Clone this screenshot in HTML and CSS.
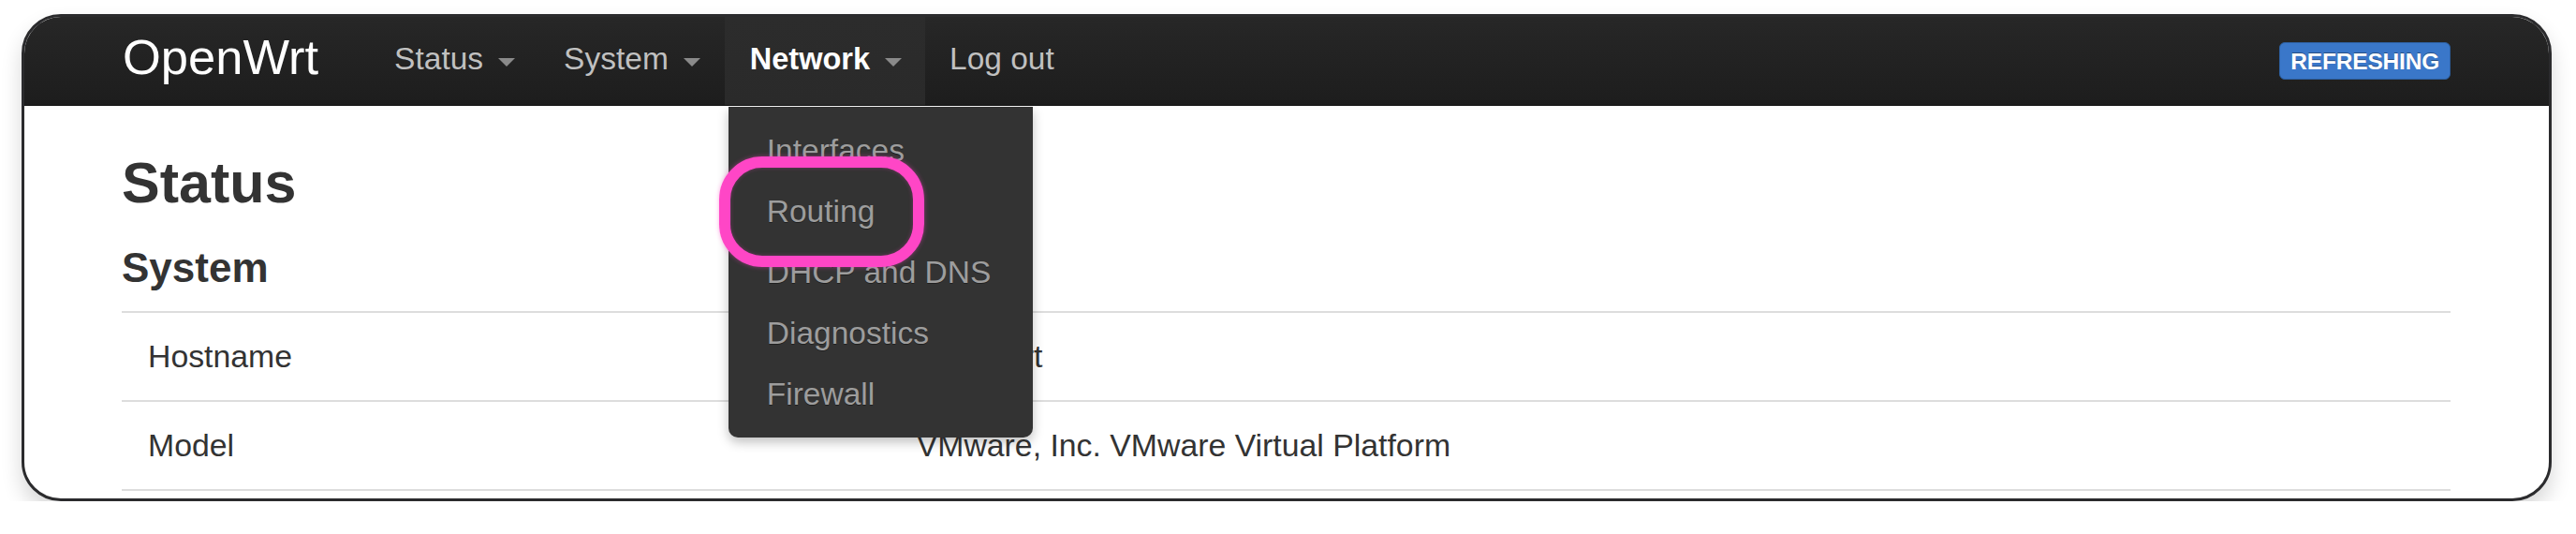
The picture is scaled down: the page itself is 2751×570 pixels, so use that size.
FILE: index.html
```html
<!DOCTYPE html>
<html lang="en">
<head>
<meta charset="utf-8">
<title>OpenWrt - Status</title>
<link rel="stylesheet" href="styles.css">
</head>
<body>
<div class="frame">
  <header class="navbar">
    <a class="brand" href="#">OpenWrt</a>
    <ul class="nav">
      <li class="nav-item"><a href="#">Status</a><span class="caret"></span></li>
      <li class="nav-item"><a href="#">System</a><span class="caret"></span></li>
      <li class="nav-item active"><a href="#">Network</a><span class="caret"></span>
        <ul class="dropdown">
          <li><a href="#">Interfaces</a></li>
          <li><a href="#">Routing</a></li>
          <li><a href="#">DHCP and DNS</a></li>
          <li><a href="#">Diagnostics</a></li>
          <li><a href="#">Firewall</a></li>
          <li class="highlight" aria-hidden="true"></li>
        </ul>
      </li>
      <li class="nav-item"><a href="#">Log out</a></li>
    </ul>
    <span class="badge">REFRESHING</span>
  </header>
  <main class="content">
    <h2 class="page-title">Status</h2>
    <h3 class="section-title">System</h3>
    <div class="table">
      <div class="row"><div class="cell label">Hostname</div><div class="cell">OpenWrt</div></div>
      <div class="row"><div class="cell label">Model</div><div class="cell">VMware, Inc. VMware Virtual Platform</div></div>
    </div>
  </main>
</div>
</body>
</html>
```
FILE: styles.css
```css
* { box-sizing: border-box; }
html, body { margin: 0; padding: 0; background: #ffffff; }
body {
  font-family: "Liberation Sans", Arial, Helvetica, sans-serif;
  color: #333333;
}
a { text-decoration: none; color: inherit; }
ul { list-style: none; margin: 0; padding: 0; }

.frame {
  margin: 15px 0 0 23px;
  width: 2702px;
  height: 520px;
  border: 3px solid #2b2b2d;
  border-radius: 42px;
  overflow: hidden;
  background: #ffffff;
  box-shadow: 0 12px 22px rgba(0, 0, 0, 0.16);
}

.navbar {
  height: 95px;
  display: flex;
  align-items: stretch;
  padding: 0 105px 0 105px;
  background: linear-gradient(#272727, #1d1d1d);
  border-bottom: 1px solid #111;
}

.brand {
  display: flex;
  align-items: center;
  padding-bottom: 10px;
  font-size: 52.5px;
  color: #ffffff;
  margin-right: 55px;
}

.nav {
  display: flex;
  align-items: stretch;
}

.nav-item {
  position: relative;
  display: flex;
  align-items: center;
  gap: 16px;
  padding: 0 26px 4px 26px;
  font-size: 33.5px;
  color: #c0c0c0;
  text-shadow: 0 -1px 0 rgba(0, 0, 0, 0.25);
}

.nav-item.active {
  background: linear-gradient(#2c2c2c, #2a2a2a);
  color: #ffffff;
  font-weight: bold;
  font-size: 32.5px;
  padding: 0 25px 4px 27px;
}

.caret {
  width: 0;
  height: 0;
  margin-top: 6px;
  border-left: 9px solid transparent;
  border-right: 9px solid transparent;
  border-top: 9px solid #8a8a8a;
}

.dropdown {
  position: absolute;
  top: 96px;
  left: 4px;
  width: 325px;
  padding: 14px 0;
  background: #333333;
  border-radius: 0 0 10px 10px;
  box-shadow: 0 5px 12px rgba(0, 0, 0, 0.25);
  font-weight: normal;
  z-index: 5;
}

.dropdown li a {
  display: block;
  height: 65px;
  line-height: 65px;
  padding: 0 41px;
  font-size: 33.5px;
  color: #9d9d9d;
  white-space: nowrap;
  text-shadow: 0 1px 0 rgba(0, 0, 0, 0.4);
}

.dropdown .highlight {
  position: absolute;
  left: -10px;
  top: 53px;
  width: 219px;
  height: 118px;
  border: 12px solid #ff46c6;
  border-radius: 46px;
  box-shadow: 0 0 5px rgba(255, 70, 198, 0.45), inset 0 0 4px rgba(255, 70, 198, 0.3);
}

.badge {
  margin-left: auto;
  align-self: center;
  height: 40px;
  line-height: 40px;
  padding: 0 11px;
  margin-top: -1px;
  border-radius: 6px;
  background: #3a77c9;
  border: 1px solid #2d5f9f;
  color: #ffffff;
  font-weight: bold;
  font-size: 24.5px;
  letter-spacing: -0.2px;
  text-shadow: 0 -1px 0 rgba(0, 0, 0, 0.35);
}

.content {
  padding: 0 105px 0 104px;
}

.page-title {
  margin: 49px 0 0 0;
  font-size: 61px;
  line-height: 67px;
  font-weight: bold;
  color: #333333;
}

.section-title {
  margin: 33px 0 0 0;
  font-size: 44px;
  line-height: 48px;
  font-weight: bold;
  color: #333333;
}

.table {
  margin-top: 22px;
  border-bottom: 2px solid #dddddd;
}

.row {
  display: grid;
  grid-template-columns: 33% 1fr;
  height: 95px;
  border-top: 2px solid #dddddd;
}

.cell {
  display: flex;
  align-items: center;
  padding: 0 28px;
  font-size: 33.8px;
  color: #333333;
}
```
